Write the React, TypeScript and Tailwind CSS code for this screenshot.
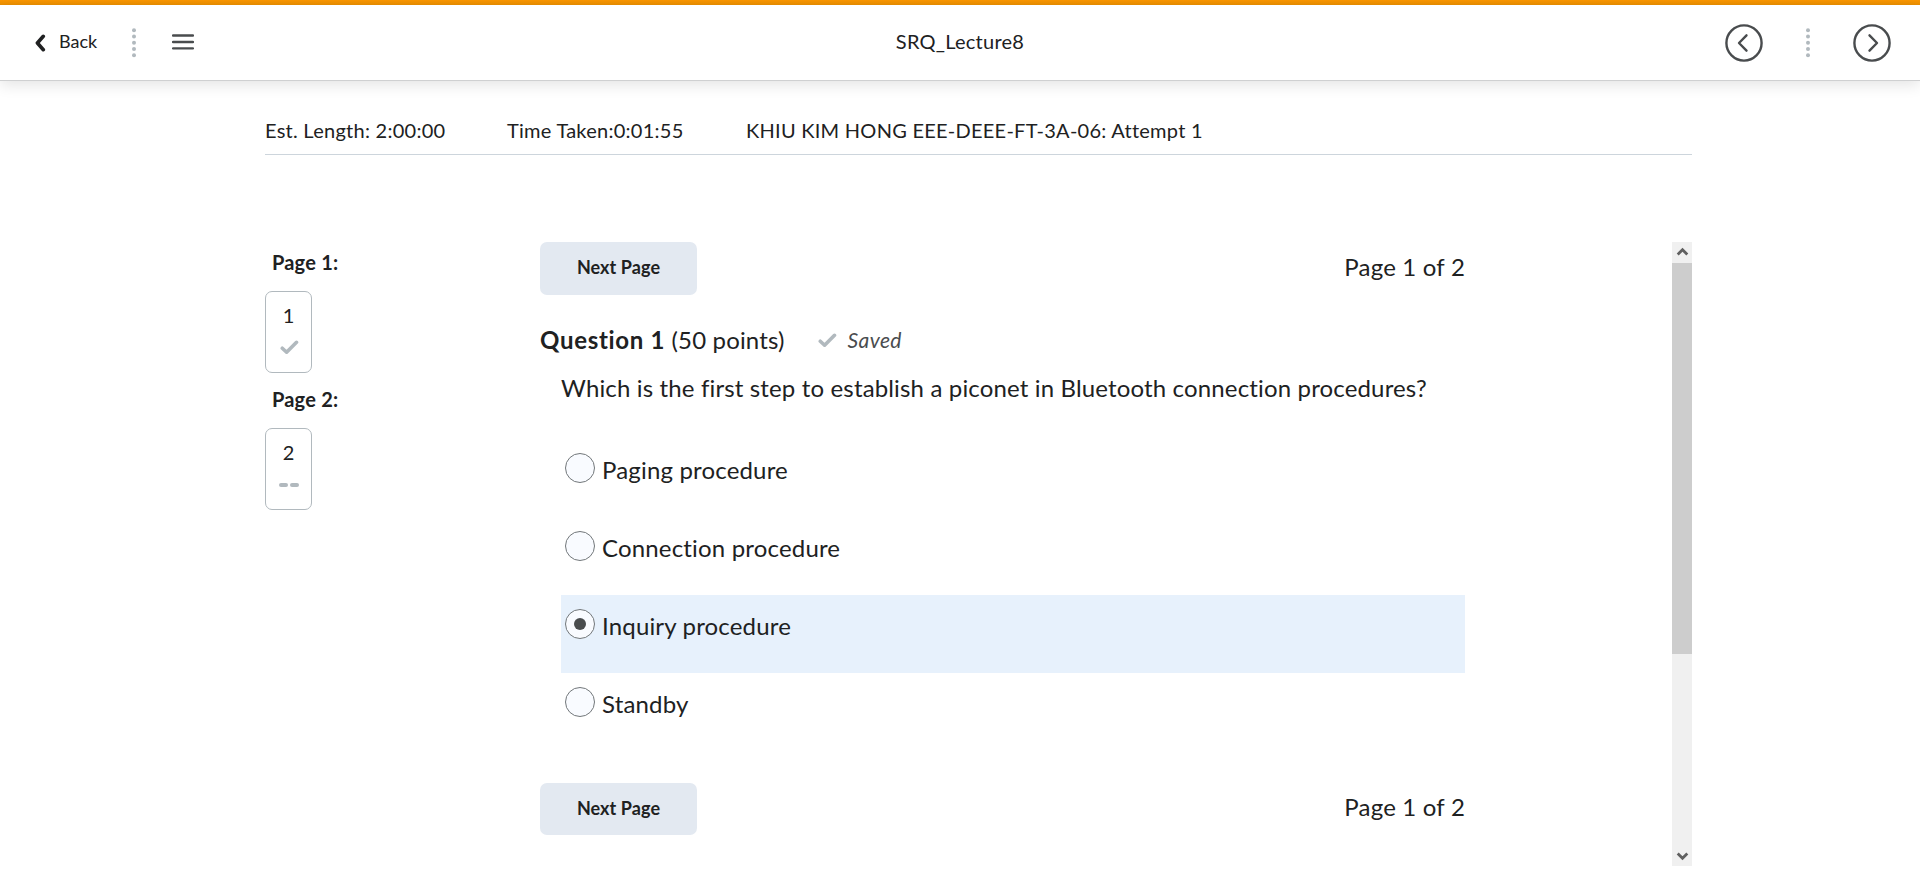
import React from "react";

const options = [
  { label: "Paging procedure", selected: false },
  { label: "Connection procedure", selected: false },
  { label: "Inquiry procedure", selected: true },
  { label: "Standby", selected: false },
];

function DotDivider() {
  return (
    <svg className="h-[30px] w-1" viewBox="0 0 4 30" fill="#b1b9be">
      {[2.3, 8.5, 14.8, 21, 27.3].map((y) => (
        <circle key={y} cx="2" cy={y} r="2" />
      ))}
    </svg>
  );
}

function Check() {
  return (
    <svg className="h-[15px] w-[19px]" viewBox="0 0 19 15" fill="none" stroke="#b1b9be" strokeWidth="3.6" strokeLinecap="round" strokeLinejoin="round">
      <path d="M2.3 8.2 L6.6 12.2 L16.5 2.3" />
    </svg>
  );
}

function CircleArrow({ right = false }: { right?: boolean }) {
  return (
    <svg className="mb-px h-[38px] w-[38px]" viewBox="0 0 38 38" fill="none" stroke="#494c4e" strokeWidth="2.4" strokeLinecap="round" strokeLinejoin="round">
      <circle cx="19" cy="19" r="17.6" />
      <path d={right ? "M16.5 11.3 L24 19 L16.5 26.7" : "M21.5 11.3 L14 19 L21.5 26.7"} />
    </svg>
  );
}

function PagerRow({ compact = false }: { compact?: boolean }) {
  return (
    <div className={compact ? "flex h-[52px] items-center justify-between" : "flex h-[53px] items-center justify-between"}>
      <button className="h-full w-[157px] rounded-[7px] bg-[#e3e9f1] pb-[3px] text-[18px] font-bold leading-none tracking-[0.08px]">Next Page</button>
      <span className={compact ? "pb-1 text-[24px] leading-[36px] tracking-[0.2px]" : "pb-[3px] text-[24px] leading-[36px] tracking-[0.2px]"}>Page 1 of 2</span>
    </div>
  );
}

function PageBox({ page, done }: { page: number; done: boolean }) {
  return (
    <div className="h-[137px]">
      <div className="pl-[7px] text-[20px] font-bold leading-[40px] tracking-[0.2px]">Page {page}:</div>
      <div className="mt-[9px] flex h-[82px] w-[47px] flex-col items-center rounded-[7px] border border-[#b1b9be] pt-[10px]">
        <span className="text-[20px] leading-[26px]">{page}</span>
        <span className="flex h-[38px] items-center">
          {done ? (
            <span className="mt-px ml-px"><Check /></span>
          ) : (
            <span className="mt-[2px] flex gap-[2px]">
              <i className="h-1 w-[9px] rounded-full bg-[#b1b9be]" />
              <i className="h-1 w-[9px] rounded-full bg-[#b1b9be]" />
            </span>
          )}
        </span>
      </div>
    </div>
  );
}

function ScrollChevron({ down = false }: { down?: boolean }) {
  return (
    <svg className="h-[21px] w-5" viewBox="0 0 20 21" fill="none" stroke="#606060" strokeWidth="2.8">
      <path d={down ? "M5.7 8.5 L10.5 13.2 L15.3 8.5" : "M5.7 12.5 L10.5 7.8 L15.3 12.5"} />
    </svg>
  );
}

export default function App() {
  return (
    <div className="flex h-[888px] w-full flex-col overflow-hidden bg-white font-['Lato',sans-serif] text-[#202122]">
      <div className="h-[5px] shrink-0 bg-linear-to-b from-[#fb9700] to-[#ea8e00]" />
      <header className="grid h-[76px] shrink-0 grid-cols-3 items-center border-b border-[#cfd0d1] pt-px shadow-[0_4px_14px_rgba(0,0,0,0.11)]">
        <div className="flex items-center pl-[35px]">
          <svg className="mb-px h-[18px] w-[11px]" viewBox="0 0 11 18" fill="none" stroke="#202122" strokeWidth="3.6" strokeLinecap="round" strokeLinejoin="round">
            <path d="M8.3 2.3 L2.4 9 L8.3 15.7" />
          </svg>
          <span className="ml-[13px] w-[38px] pb-[5px] text-[18px] leading-6">Back</span>
          <span className="ml-[35px]"><DotDivider /></span>
          <svg className="mb-[2px] ml-[36px] h-4 w-[22px]" viewBox="0 0 22 16" stroke="#494c4e" strokeWidth="2.3" strokeLinecap="round">
            <path d="M1 1.5 H21 M1 8 H21 M1 14.4 H21" />
          </svg>
        </div>
        <h1 className="pb-[5px] text-center text-[20px] leading-7 tracking-[0.25px]">SRQ_Lecture8</h1>
        <div className="flex items-center justify-end pr-[29px]">
          <CircleArrow />
          <span className="mx-[43px]"><DotDivider /></span>
          <CircleArrow right />
        </div>
      </header>

      <main className="ml-[265px] flex w-[1427px] flex-col">
        <div className="flex h-[74px] border-b border-[#cdd5dc] pt-[34px] text-[20px] leading-[30px] tracking-[0.26px]">
          <span className="w-[242px]">Est. Length: 2:00:00</span>
          <span className="w-[239px]">Time Taken:0:01:55</span>
          <span>KHIU KIM HONG EEE-DEEE-FT-3A-06: Attempt 1</span>
        </div>

        <div className="mt-[87px] flex h-[624px]">
          <aside className="w-[275px]">
            <PageBox page={1} done />
            <PageBox page={2} done={false} />
          </aside>

          <section className="w-[925px]">
            <PagerRow />
            <div className="mt-[27px] flex h-[36px] items-center text-[24px] leading-[36px] tracking-[0.15px]">
              <h2><b className="tracking-[0.7px]">Question 1</b> (50 points)</h2>
              <span className="ml-[33px]"><Check /></span>
              <em className="ml-[11px] pb-px text-[21px] tracking-[0.4px] text-[#494c4e]">Saved</em>
            </div>
            <p className="mt-[12px] pl-[21px] text-[24px] leading-[36px] tracking-[0.15px]">
              Which is the first step to establish a piconet in Bluetooth connection procedures?
            </p>
            <div className="mt-[33px] pl-[21px]">
              {options.map((o) => (
                <label key={o.label} className={o.selected ? "flex h-[78px] bg-[#e7f1fc] pl-1 pt-[14px]" : "flex h-[78px] pl-1 pt-[14px]"}>
                  <span className="flex h-[30px] w-[30px] items-center justify-center rounded-full border border-[#72777a] bg-[#f9fbff]">
                    {o.selected && <i className="h-3 w-3 rounded-full bg-[#494c4e]" />}
                  </span>
                  <span className="ml-[7px] text-[24px] leading-[34px] tracking-[0.17px]">{o.label}</span>
                </label>
              ))}
            </div>
            <div className="mt-[32px]"><PagerRow compact /></div>
          </section>

          <div className="ml-auto flex w-5 flex-col bg-[#f0f0f0]">
            <ScrollChevron />
            <div className="h-[391px] bg-[#cdcdcd]" />
            <div className="mt-auto"><ScrollChevron down /></div>
          </div>
        </div>
      </main>
    </div>
  );
}
